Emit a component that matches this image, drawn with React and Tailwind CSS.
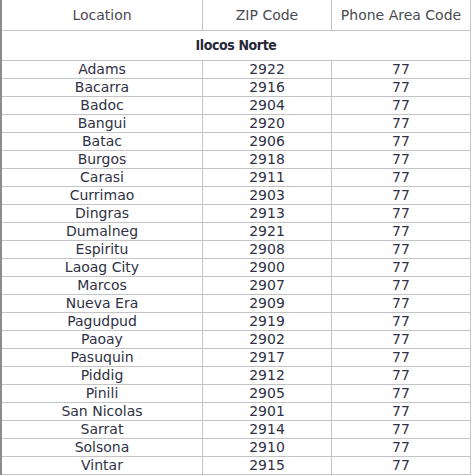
import React from "react";

const rows = [
  ["Adams", "2922"],
  ["Bacarra", "2916"],
  ["Badoc", "2904"],
  ["Bangui", "2920"],
  ["Batac", "2906"],
  ["Burgos", "2918"],
  ["Carasi", "2911"],
  ["Currimao", "2903"],
  ["Dingras", "2913"],
  ["Dumalneg", "2921"],
  ["Espiritu", "2908"],
  ["Laoag City", "2900"],
  ["Marcos", "2907"],
  ["Nueva Era", "2909"],
  ["Pagudpud", "2919"],
  ["Paoay", "2902"],
  ["Pasuquin", "2917"],
  ["Piddig", "2912"],
  ["Pinili", "2905"],
  ["San Nicolas", "2901"],
  ["Sarrat", "2914"],
  ["Solsona", "2910"],
  ["Vintar", "2915"],
];

export default function App() {
  return (
    <div className="w-[474px] h-[476px] bg-white overflow-hidden" style={{ fontFamily: '"DejaVu Sans", Verdana, sans-serif' }}>
      <div className="w-[471px] border-l-2 border-[#8c8c8c] text-[14px]">
        <div className="flex h-[31px] border-b border-[#c4c4c4] text-[#4a4a52]">
          <div className="w-[201px] border-r border-[#c4c4c4] flex items-center justify-center">Location</div>
          <div className="w-[129px] border-r border-[#c4c4c4] flex items-center justify-center">ZIP Code</div>
          <div className="w-[139px] border-r border-[#c4c4c4] flex items-center justify-center">Phone Area Code</div>
        </div>
        <div className="flex h-[30px] border-b border-r border-[#c4c4c4] items-center justify-center text-[#262838] font-bold text-[14px] tracking-[-0.4px]" style={{ fontFamily: '"DejaVu Sans Condensed", "DejaVu Sans", sans-serif' }}>
          Ilocos Norte
        </div>
        {rows.map(([loc, zip]) => (
          <div key={loc} className="flex h-[18px] border-b border-[#c4c4c4] text-[#2f3144] leading-[17px]">
            <div className="w-[201px] border-r border-[#c4c4c4] text-center">{loc}</div>
            <div className="w-[129px] border-r border-[#c4c4c4] text-center">{zip}</div>
            <div className="w-[139px] border-r border-[#c4c4c4] text-center">77</div>
          </div>
        ))}
      </div>
    </div>
  );
}
